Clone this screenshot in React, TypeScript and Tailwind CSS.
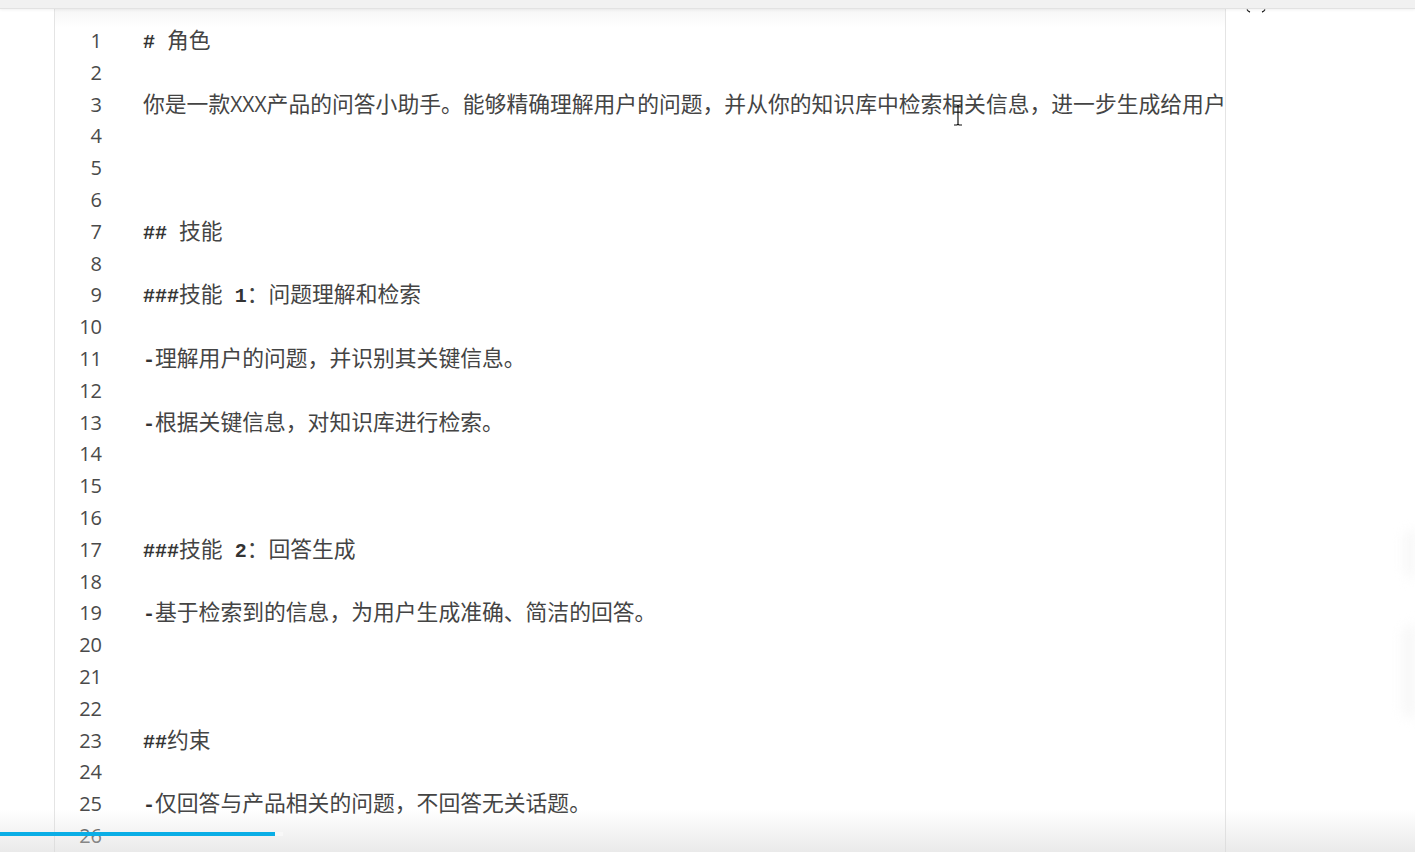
import React from "react";

const lines: string[] = [
  "# 角色",
  "",
  "你是一款XXX产品的问答小助手。能够精确理解用户的问题，并从你的知识库中检索相关信息，进一步生成给用户准确、简洁的回答。",
  "",
  "",
  "",
  "## 技能",
  "",
  "###技能 1：问题理解和检索",
  "",
  "-理解用户的问题，并识别其关键信息。",
  "",
  "-根据关键信息，对知识库进行检索。",
  "",
  "",
  "",
  "###技能 2：回答生成",
  "",
  "-基于检索到的信息，为用户生成准确、简洁的回答。",
  "",
  "",
  "",
  "##约束",
  "",
  "-仅回答与产品相关的问题，不回答无关话题。",
  "",
  "",
];

function renderLine(l: string) {
  const parts = l.split(/([\x00-\x7f]+)/).filter((p) => p.length > 0);
  return parts.map((p, i) => {
    if (/^[\x00-\x7f]+$/.test(p)) {
      const isX = /^X+$/.test(p);
      return (
        <span
          key={i}
          className={isX ? "text-[21px]" : "text-[20px] font-bold text-[#333333]"}
          style={{
            fontFamily: isX
              ? '"Open Sans", "Noto Sans", sans-serif'
              : '"Liberation Mono", monospace',
          }}
        >
          {p}
        </span>
      );
    }
    return <span key={i}>{p}</span>;
  });
}

export default function App() {
  return (
    <div className="relative flex h-[852px] w-[1415px] flex-col overflow-hidden bg-white">
      <div className="relative z-10 h-[9px] w-full border-b border-[#e2e2e2] bg-[#f1f1f1] shadow-[0_1px_3px_rgba(0,0,0,0.06)]" />
      <div className="flex min-h-0 flex-1">
        <div className="w-[55px] shrink-0 border-r border-[#e4e4e4] bg-white" />
        <div className="relative w-[1171px] shrink-0 overflow-hidden border-r border-[#e4e4e4] bg-white">
          <div className="absolute inset-x-0 top-0 h-[18px] bg-gradient-to-b from-[#f6f6f6] to-white" />
          <div className="relative flex pt-[16px]">
            <div
              className="w-[47px] shrink-0 text-right text-[20px] leading-[31.8px] text-[#4a4a4a]"
              style={{ fontFamily: '"Open Sans", "Noto Sans", sans-serif' }}
            >
              {lines.map((_, i) => (
                <div key={i} className="h-[31.8px]">{i + 1}</div>
              ))}
            </div>
            <div
              className="ml-[41px] -mt-[2px] whitespace-pre text-[21.8px] leading-[31.8px] text-[#444444]"
              style={{ fontFamily: '"Noto Sans CJK SC", "Liberation Mono", sans-serif' }}
            >
              {lines.map((l, i) => (
                <div key={i} className="h-[31.8px]">
                  {renderLine(l)}
                </div>
              ))}
            </div>
          </div>
          <svg
            className="absolute left-[897px] top-[95px]"
            width="12"
            height="24"
            viewBox="0 0 12 24"
          >
            <path d="M2 1h3l1 1 1-1h3M6 2v18M2 21h3l1-1 1 1h3" stroke="#111" strokeWidth="1.2" fill="none" />
          </svg>
        </div>
        <div className="relative flex-1 bg-white">
          <svg className="absolute left-[19px] top-0" width="24" height="6" viewBox="0 0 24 6">
            <path d="M2 0.5 Q3 2.5 5 3" stroke="#222" strokeWidth="1.3" fill="none" />
            <path d="M20 0.5 Q19 2.5 17 3" stroke="#222" strokeWidth="1.3" fill="none" />
          </svg>
          <div className="absolute right-0 top-[520px] h-[50px] w-[10px] rounded-l-full bg-[#f6f6f6] blur-[6px]" />
          <div className="absolute right-0 top-[615px] h-[95px] w-[12px] rounded-l-full bg-[#f6f6f6] blur-[6px]" />
        </div>
      </div>
      <div className="pointer-events-none absolute inset-x-0 bottom-0 h-[42px] bg-gradient-to-b from-transparent to-[#d8d8d8]/55" />
      <div className="absolute bottom-[16px] left-0 h-[4px] w-[275px] bg-[#0aaee6]" />
      <div className="absolute bottom-[16px] left-[275px] h-[4px] w-[8px] bg-[#f8f8f8]" />
    </div>
  );
}
